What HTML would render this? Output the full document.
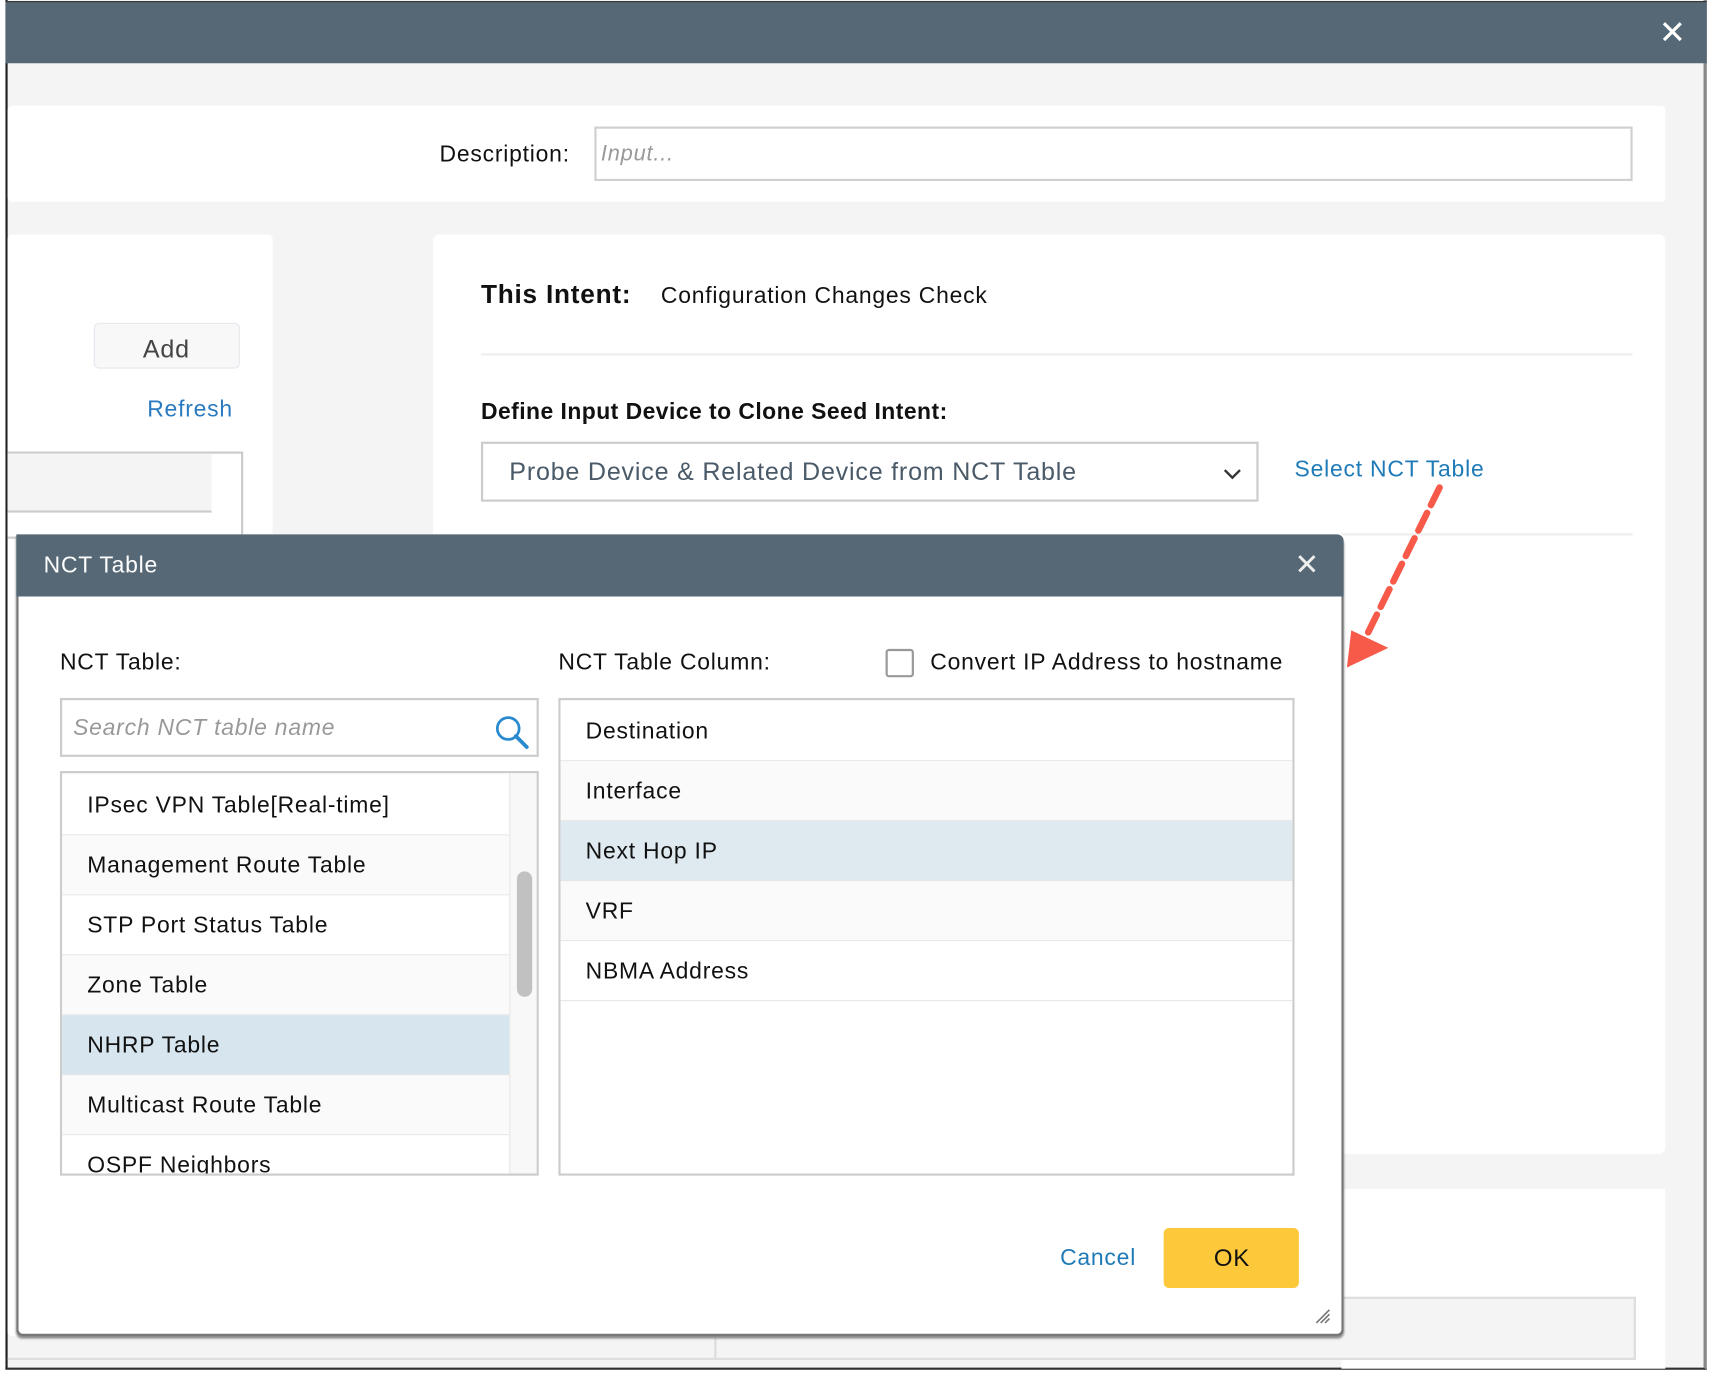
<!DOCTYPE html>
<html><head><meta charset="utf-8"><style>
*{box-sizing:border-box;margin:0;padding:0}
html,body{width:1710px;height:1378px;overflow:hidden;background:#fff;font-family:"Liberation Sans",sans-serif}
#w{position:absolute;left:0;top:0;width:1568px;height:1263px;transform:scale(1.0906);transform-origin:0 0;letter-spacing:0.045em}
.a{position:absolute}
.t{position:absolute;white-space:nowrap;line-height:1}
.blue{color:#2a7ac0}
.row{position:absolute;left:0;right:0;height:55px;border-bottom:1px solid #e6e6e6;font-size:21px;color:#111;padding-left:23px;line-height:55px}
</style></head><body><div id="w">
<div class="a" style="left:5px;top:0;width:1560px;height:1256px;background:#f4f4f4;border-left:2px solid #222;border-right:3px solid #888;border-bottom:2px solid #333"></div>
<div class="a" style="left:5px;top:1px;width:1560px;height:57px;background:#566875;border-top:1px solid #333"></div>
<div class="t" style="left:1521px;top:16px;color:#fff;font-size:30px">✕</div>
<div class="a" style="left:7px;top:97px;width:1520px;height:88px;background:#fff;border-radius:4px"></div>
<div class="t" style="left:403px;top:131px;font-size:21px;color:#111">Description:</div>
<div class="a" style="left:545px;top:116px;width:952px;height:50px;border:2px solid #d0d0d0;background:#fff"></div>
<div class="t" style="left:551px;top:131px;font-size:20px;color:#999;font-style:italic">Input...</div>
<div class="a" style="left:7px;top:215px;width:243px;height:1010px;background:#fff;border-radius:4px"></div>
<div class="a" style="left:7px;top:1245px;width:1490px;height:2px;background:#ddd"></div>
<div class="a" style="left:86px;top:296px;width:134px;height:42px;background:#f8f8f8;border:1px solid #e4e8ee;border-radius:5px"></div>
<div class="t" style="left:131px;top:309px;font-size:23px;color:#444">Add</div>
<div class="t blue" style="left:135px;top:365px;font-size:21px">Refresh</div>
<div class="a" style="left:7px;top:414px;width:216px;height:80px;border:2px solid #ccc;border-left:0;background:#fff"></div>
<div class="a" style="left:7px;top:416px;width:187px;height:54px;background:#f4f4f4;border-bottom:2px solid #ccc"></div>
<div class="a" style="left:397px;top:215px;width:1130px;height:843px;background:#fff;border-radius:6px"></div>
<div class="t" style="left:441px;top:259px;font-size:24px;font-weight:bold;color:#111">This Intent:</div>
<div class="t" style="left:606px;top:261px;font-size:21px;color:#111">Configuration Changes Check</div>
<div class="a" style="left:441px;top:324px;width:1056px;height:2px;background:#eee"></div>
<div class="t" style="left:441px;top:367px;font-size:21px;font-weight:bold;color:#111;letter-spacing:0.02em">Define Input Device to Clone Seed Intent:</div>
<div class="a" style="left:441px;top:405px;width:713px;height:55px;border:2px solid #ccc"></div>
<div class="t" style="left:467px;top:421px;font-size:23px;color:#4a5a68">Probe Device &amp; Related Device from NCT Table</div>
<svg class="a" style="left:1120px;top:428px" width="20" height="14"><path d="M3 3l7 7 7-7" stroke="#333" stroke-width="2.2" fill="none"/></svg>
<div class="t" style="left:1187px;top:420px;font-size:21px;color:#1f7ab8">Select NCT Table</div>
<div class="a" style="left:1230px;top:489px;width:267px;height:2px;background:#eee"></div>
<div class="a" style="left:1230px;top:1090px;width:297px;height:165px;background:#fff"></div>
<div class="a" style="left:655px;top:1189px;width:845px;height:58px;border:2px solid #ddd;background:#f4f4f4"></div>
<svg class="a" style="left:1225px;top:440px" width="110" height="180"><path d="M95 7L22 155" stroke="#f85a4a" stroke-width="6" stroke-dasharray="18 8" stroke-linecap="round" fill="none"/><path d="M10 172L14 138L48 154Z" fill="#f85a4a"/></svg>
<div class="a" style="left:15px;top:490px;width:1217px;height:735px;background:#fff;border:2px solid #777;border-top:0;border-radius:0 8px 6px 6px;box-shadow:0 2px 2px #888"></div>
<div class="a" style="left:15px;top:490px;width:1217px;height:57px;background:#566875;border-radius:0 6px 0 0"></div>
<div class="t" style="left:40px;top:508px;font-size:21px;color:#fff">NCT Table</div>
<div class="t" style="left:1187px;top:505px;color:#eee;font-size:27px">✕</div>
<div class="t" style="left:55px;top:597px;font-size:21px;color:#111">NCT Table:</div>
<div class="a" style="left:55px;top:640px;width:439px;height:54px;border:2px solid #ccc"></div>
<div class="t" style="left:67px;top:657px;font-size:21px;color:#999;font-style:italic">Search NCT table name</div>
<svg class="a" style="left:452px;top:654px" width="34" height="34"><circle cx="14" cy="14" r="10" stroke="#2a8ad0" stroke-width="2.5" fill="none"/><path d="M21 21l10 10" stroke="#2a8ad0" stroke-width="3.5" stroke-linecap="round"/></svg>
<div class="a" style="left:55px;top:707px;width:439px;height:371px;border:2px solid #ccc;overflow:hidden">
 <div class="a" style="left:0;top:2px;width:410px;height:370px">
  <div class="row" style="top:0;background:#fff">IPsec VPN Table[Real-time]</div>
  <div class="row" style="top:55px;background:#fafafa">Management Route Table</div>
  <div class="row" style="top:110px;background:#fff">STP Port Status Table</div>
  <div class="row" style="top:165px;background:#fafafa">Zone Table</div>
  <div class="row" style="top:220px;background:#d6e5ee">NHRP Table</div>
  <div class="row" style="top:275px;background:#fafafa">Multicast Route Table</div>
  <div class="row" style="top:330px;background:#fff">OSPF Neighbors</div>
 </div>
 <div class="a" style="left:410px;top:0;width:27px;height:371px;background:#f8f8f8;border-left:1px solid #e6e6e6"></div>
 <div class="a" style="left:417px;top:90px;width:14px;height:115px;background:#c1c1c1;border-radius:7px"></div>
</div>
<div class="t" style="left:512px;top:597px;font-size:21px;color:#111">NCT Table Column:</div>
<div class="a" style="left:812px;top:595px;width:26px;height:26px;border:2px solid #999;border-radius:3px"></div>
<div class="t" style="left:853px;top:597px;font-size:21px;color:#111">Convert IP Address to hostname</div>
<div class="a" style="left:512px;top:640px;width:675px;height:438px;border:2px solid #ccc;overflow:hidden">
 <div class="row" style="top:1px;background:#fff">Destination</div>
 <div class="row" style="top:56px;background:#fafafa">Interface</div>
 <div class="row" style="top:111px;background:#dfe9f0">Next Hop IP</div>
 <div class="row" style="top:166px;background:#fafafa">VRF</div>
 <div class="row" style="top:221px;background:#fff">NBMA Address</div>
</div>
<div class="t" style="left:972px;top:1143px;font-size:21px;color:#1f7ab8">Cancel</div>
<div class="a" style="left:1067px;top:1126px;width:124px;height:55px;background:#fdc93a;border-radius:5px"></div>
<div class="t" style="left:1113px;top:1143px;font-size:22px;color:#111">OK</div>
<svg class="a" style="left:1205px;top:1199px" width="16" height="16"><path d="M2 14L14 2M6 14L14 6M10 14L14 10" stroke="#777" stroke-width="1.5"/></svg>
</div></body></html>
